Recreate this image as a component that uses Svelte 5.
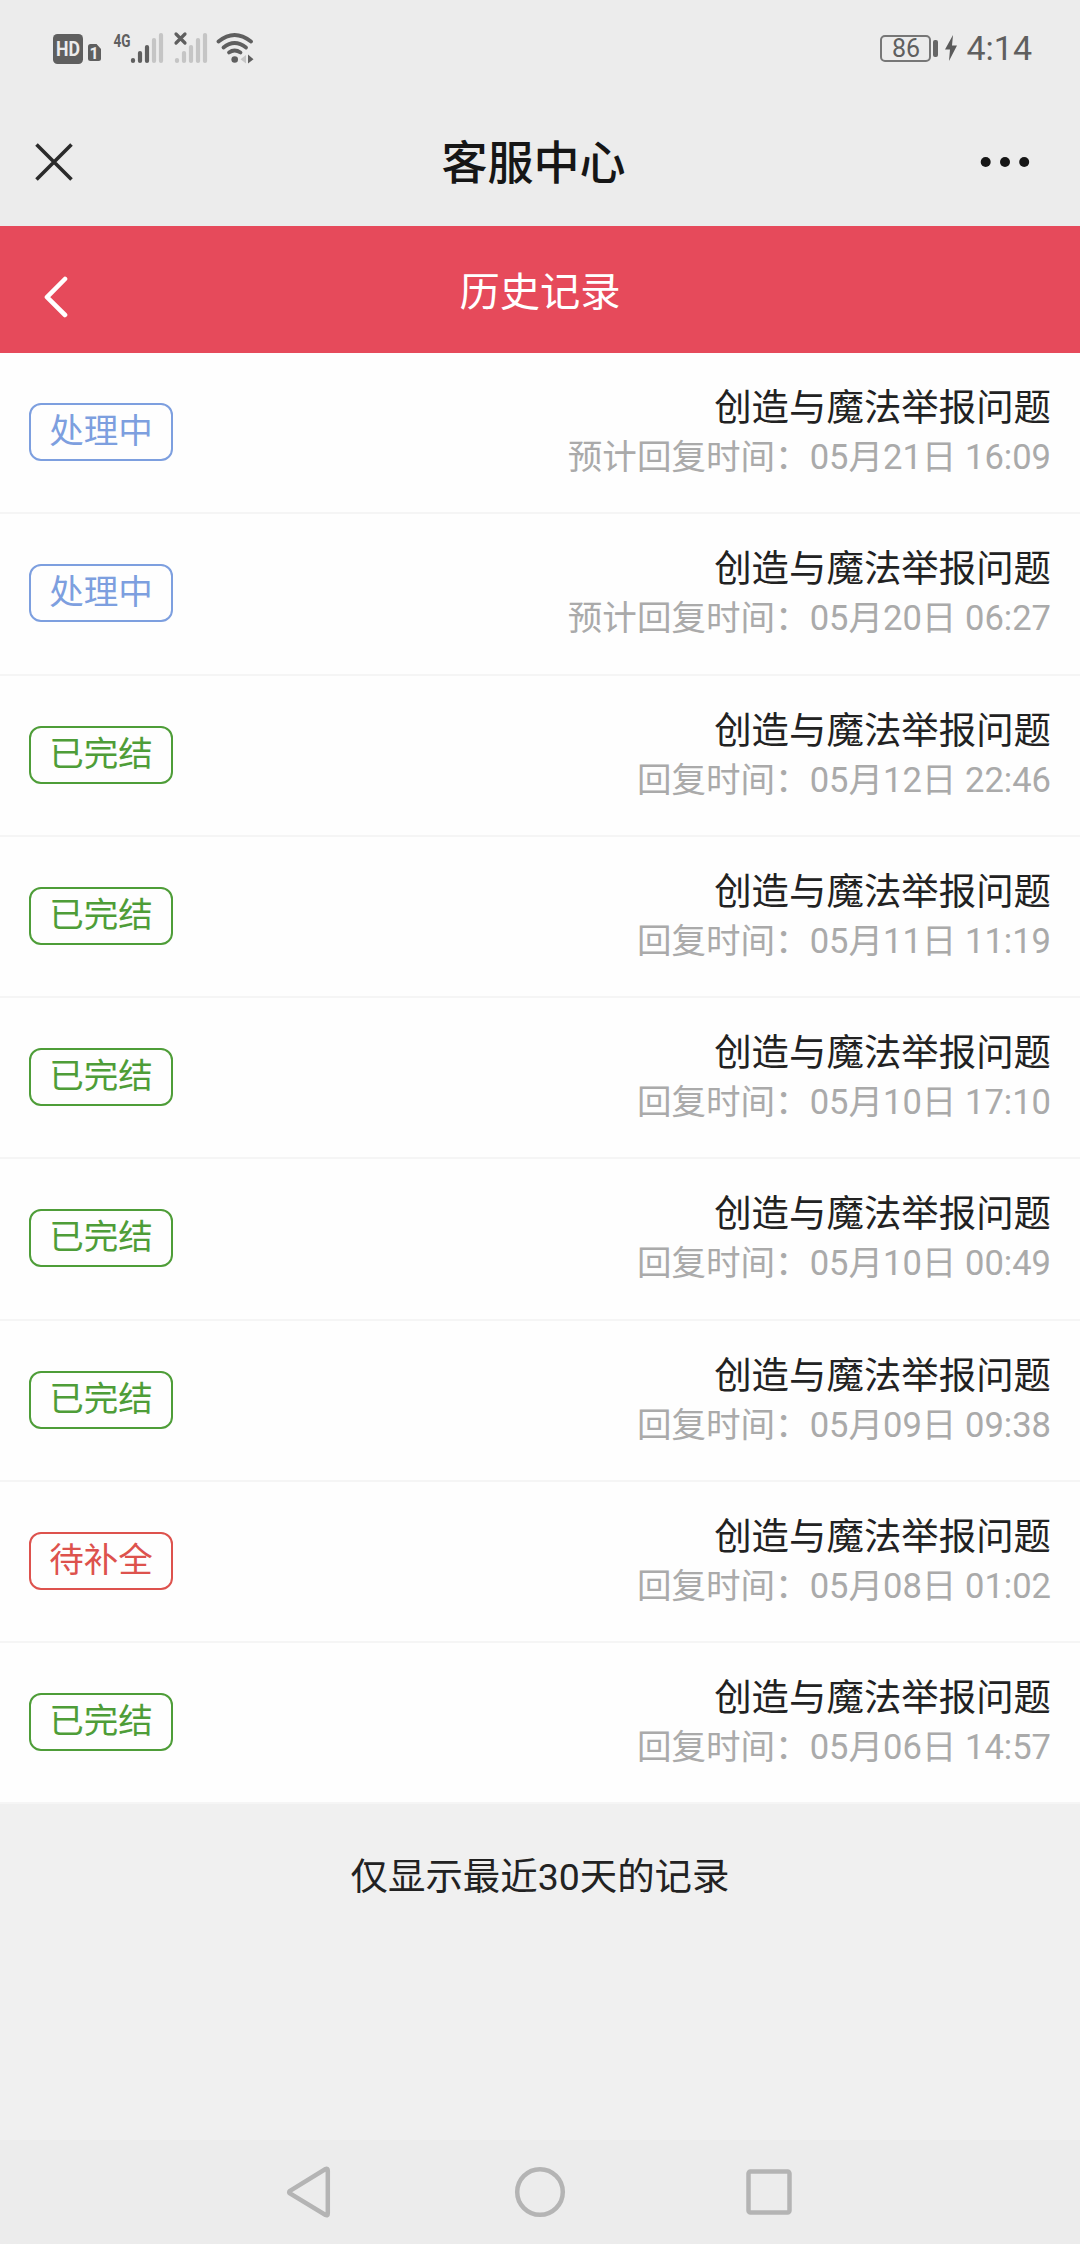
<script>
const records = [
  { status: 'processing', label: '预计回复时间', time: '05月21日 16:09' },
  { status: 'processing', label: '预计回复时间', time: '05月20日 06:27' },
  { status: 'done', label: '回复时间', time: '05月12日 22:46' },
  { status: 'done', label: '回复时间', time: '05月11日 11:19' },
  { status: 'done', label: '回复时间', time: '05月10日 17:10' },
  { status: 'done', label: '回复时间', time: '05月10日 00:49' },
  { status: 'done', label: '回复时间', time: '05月09日 09:38' },
  { status: 'pending', label: '回复时间', time: '05月08日 01:02' },
  { status: 'done', label: '回复时间', time: '05月06日 14:57' }
]

const statusText = {
  processing: '处理中',
  done: '已完结',
  pending: '待补全'
}
</script>

<div class="screen">
  <div class="status-bar">
    <svg class="signals" width="210" height="40" viewBox="50 28 210 40">
      <rect x="53" y="34" width="30" height="30" rx="4.5" fill="#5f5f5f" />
      <text x="68" y="56" class="hd" text-anchor="middle" textLength="24" lengthAdjust="spacingAndGlyphs">HD</text>
      <path d="M90.5 44h6l4.5 5v9.5a2.5 2.5 0 0 1-2.5 2.5h-8a2.5 2.5 0 0 1-2.5-2.5v-12a2.5 2.5 0 0 1 2.5-2.5z" fill="#5f5f5f" />
      <text x="94" y="58.5" class="sim" text-anchor="middle">1</text>
      <text x="113.5" y="46.5" class="net" textLength="17" lengthAdjust="spacingAndGlyphs">4G</text>
      <g stroke="#5f5f5f" stroke-width="4.2" stroke-linecap="round">
        <path d="M133 60v1M140 53v8M147 47v14" />
        <path d="M154 40v21M161 35v26" stroke="#c5c5c5" />
      </g>
      <g stroke="#c5c5c5" stroke-width="4.2" stroke-linecap="round">
        <path d="M177 60v1M184 53v8M191 47v14M198 40v21M205 35v26" />
      </g>
      <path d="M176 34l9 9M185 34l-9 9" stroke="#5f5f5f" stroke-width="3.2" stroke-linecap="round" />
      <g fill="none" stroke="#5f5f5f" stroke-width="3.8" stroke-linecap="round">
        <path d="M218.5 41.5Q234.5 28.5 251 41.5" />
        <path d="M223.5 47.5Q234.5 38.5 246 47.500" />
        <path d="M229 52.500Q234.500 48.500 240.500 52.500" />
      </g>
      <circle cx="234.7" cy="59.5" r="3.3" fill="#5f5f5f" />
      <path d="M246 55v8.500l-5.500-4.200z" fill="#c5c5c5" />
      <path d="M248 54.500l5.500 4.800l-5.500 4.200z" fill="#5f5f5f" />
    </svg>
    <div class="power">
      <span class="battery">86</span>
      <span class="battery-cap"></span>
      <svg width="12" height="26" viewBox="0 0 12 26">
        <path d="M8 0L0 14.500h5L4 26l8-15.500H7z" fill="#5a5a5a" />
      </svg>
      <span class="clock">4:14</span>
    </div>
  </div>

  <header class="app-bar">
    <button class="icon-button" aria-label="关闭">
      <svg width="38" height="38" viewBox="0 0 38 38">
        <path d="M1.500 1.500l35 35M36.500 1.500l-35 35" stroke="#2b2b2b" stroke-width="3.600" />
      </svg>
    </button>
    <h1>客服中心</h1>
    <button class="icon-button" aria-label="更多">
      <svg width="50" height="12" viewBox="0 0 50 12">
        <g fill="#161616">
          <circle cx="5.700" cy="6" r="5" />
          <circle cx="25" cy="6" r="5" />
          <circle cx="44.200" cy="6" r="5" />
        </g>
      </svg>
    </button>
  </header>

  <nav class="page-bar">
    <button class="icon-button" aria-label="返回">
      <svg width="26" height="44" viewBox="0 0 26 44">
        <path d="M21 4L3 22.200L21 40" fill="none" stroke="#fff" stroke-width="4.600" stroke-linecap="round" stroke-linejoin="round" />
      </svg>
    </button>
    <h2>历史记录</h2>
  </nav>

  <ul class="records">
    {#each records as record}
      <li class="record">
        <span class="tag {record.status}">{statusText[record.status]}</span>
        <div class="info">
          <p class="title">创造与魔法举报问题</p>
          <p class="time">{record.label}：{record.time}</p>
        </div>
      </li>
    {/each}
  </ul>

  <p class="tip">仅显示最近30天的记录</p>

  <div class="system-nav">
    <svg width="52" height="56" viewBox="0 0 52 56">
      <path d="M5 26.800L40.500 5Q42.800 4 42.800 6.500V49.500Q42.800 52 40.500 51L5 29.500Q3.300 28.100 5 26.800z" />
    </svg>
    <svg width="52" height="56" viewBox="0 0 52 56">
      <circle cx="26" cy="28" r="22.800" />
    </svg>
    <svg width="52" height="56" viewBox="0 0 52 56">
      <rect x="5.500" y="7.500" width="41" height="41" rx="2" />
    </svg>
  </div>
</div>

<style>
  :global(body) {
    margin: 0;
    background: #f0f0f0;
  }

  .screen {
    width: 1080px;
    height: 2244px;
    display: flex;
    flex-direction: column;
    overflow: hidden;
    background: #f0f0f0;
    font-family: Roboto, 'Noto Sans CJK SC', sans-serif;
    color: #222;
  }

  h1,
  h2,
  p,
  ul {
    margin: 0;
    padding: 0;
    font-weight: 400;
  }

  svg {
    display: block;
  }

  .icon-button {
    display: flex;
    padding: 0;
    border: none;
    background: none;
  }

  .status-bar {
    height: 96px;
    box-sizing: border-box;
    padding: 28px 48px 0 50px;
    display: flex;
    justify-content: space-between;
    align-items: flex-start;
    background: #ececec;
  }

  .hd {
    font: 700 19.5px Roboto, sans-serif;
    fill: #ececec;
  }

  .sim {
    font: 700 16px Roboto, sans-serif;
    fill: #ececec;
  }

  .net {
    font: 700 19px Roboto, sans-serif;
    fill: #5f5f5f;
  }

  .power {
    height: 40px;
    display: flex;
    align-items: center;
    color: #5f5f5f;
  }

  .battery {
    width: 51px;
    height: 27px;
    box-sizing: border-box;
    border: 2px solid #777;
    border-radius: 5px;
    font-size: 25px;
    line-height: 23px;
    text-align: center;
  }

  .battery-cap {
    width: 5px;
    height: 17px;
    margin: 0 7px 0 2px;
    border-radius: 2px;
    background: #666;
  }

  .clock {
    margin-left: 9px;
    font-size: 34px;
    line-height: 42px;
  }

  .app-bar {
    height: 130px;
    box-sizing: border-box;
    padding: 0 50px 0 35px;
    display: flex;
    justify-content: space-between;
    align-items: flex-start;
    background: #ececec;
  }

  .app-bar .icon-button {
    height: 131px;
    align-items: center;
  }

  .app-bar h1 {
    padding-left: 14px;
    font-size: 46px;
    font-weight: 500;
    line-height: 135px;
    color: #161616;
  }

  .page-bar {
    height: 127px;
    display: grid;
    grid-template-columns: 100px 1fr 100px;
    align-items: center;
    background: #e64a5b;
    color: #fff;
  }

  .page-bar .icon-button {
    padding: 15px 0 0 44px;
  }

  .page-bar h2 {
    padding-top: 7px;
    font-size: 40.3px;
    line-height: 120px;
    text-align: center;
  }

  .records {
    list-style: none;
    background: #fefefe;
  }

  .record {
    height: 161.25px;
    box-sizing: border-box;
    padding: 0 29px 1px;
    display: flex;
    justify-content: space-between;
    align-items: center;
    border-bottom: 2px solid #f5f5f5;
  }

  .tag {
    width: 144px;
    height: 58px;
    box-sizing: border-box;
    border: 2px solid;
    border-radius: 12px;
    font-size: 34.56px;
    line-height: 52px;
    text-align: center;
  }

  .processing {
    color: #7d9fdf;
  }

  .done {
    color: #4e9d38;
  }

  .pending {
    color: #dd524d;
  }

  .info {
    text-align: right;
  }

  .title {
    font-size: 37.44px;
    line-height: 50px;
    color: #222;
  }

  .time {
    font-size: 34.56px;
    line-height: 48px;
    color: #aaa;
  }

  .tip {
    padding-top: 47px;
    font-size: 37.44px;
    line-height: 52px;
    text-align: center;
  }

  .system-nav {
    height: 104px;
    margin-top: auto;
    padding: 0 285px;
    display: flex;
    justify-content: space-between;
    align-items: center;
    background: #ececec;
  }

  .system-nav svg {
    fill: none;
    stroke: #b4b4b4;
    stroke-width: 4.5;
  }
</style>
